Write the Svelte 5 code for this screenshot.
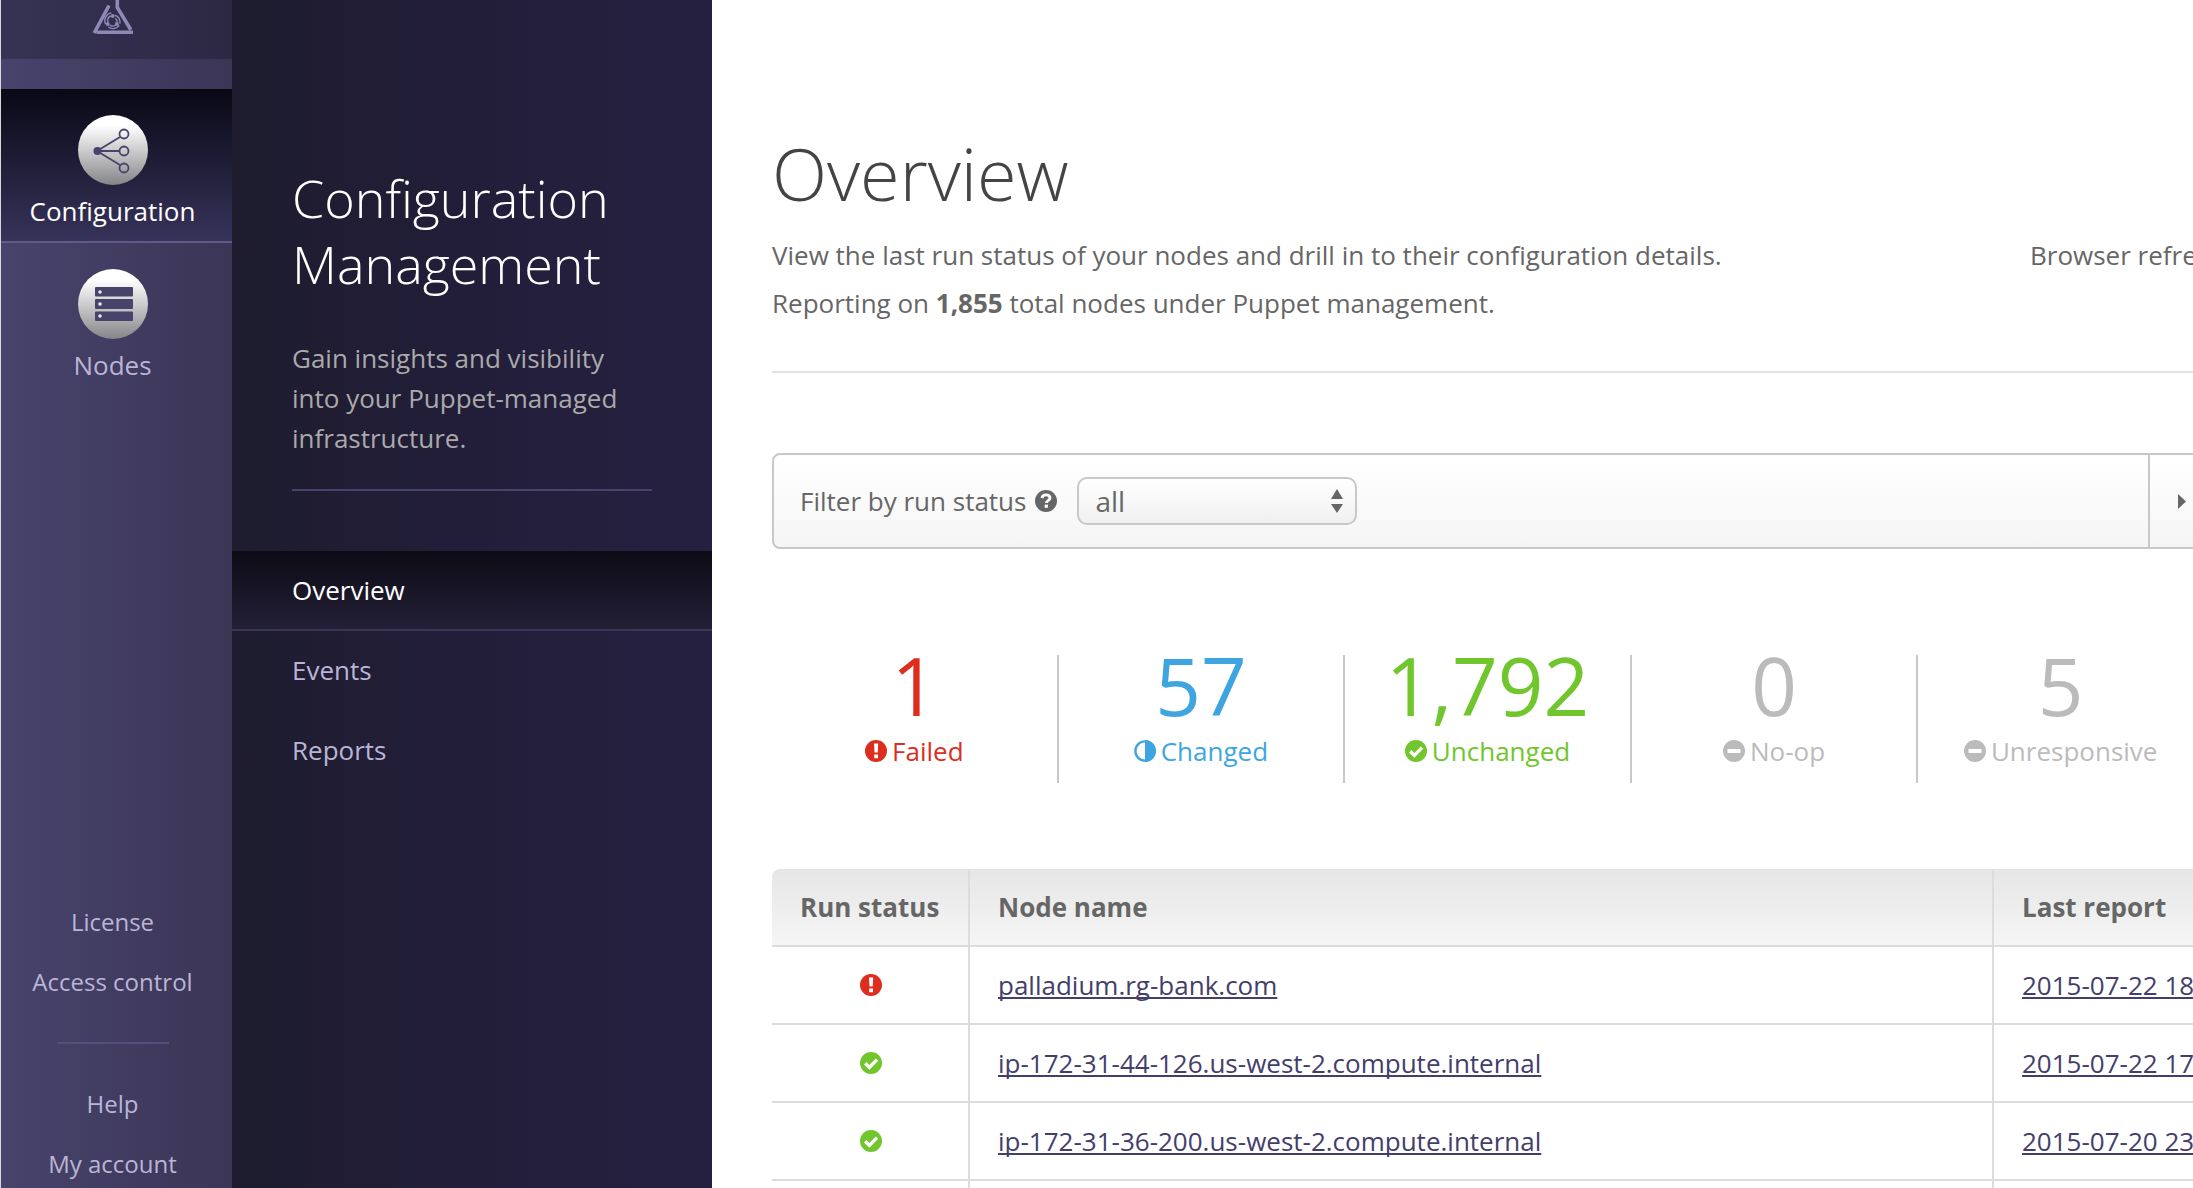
<script>
  const statuses = {
    failed: 'Failed',
    changed: 'Changed',
    unchanged: 'Unchanged',
    noop: 'No-op',
    unresponsive: 'Unresponsive',
  };
  const stats = [
    { kind: 'failed', count: '1' },
    { kind: 'changed', count: '57' },
    { kind: 'unchanged', count: '1,792' },
    { kind: 'noop', count: '0' },
    { kind: 'unresponsive', count: '5' },
  ];
  const rows = [
    { kind: 'failed', node: 'palladium.rg-bank.com', report: '2015-07-22 18' },
    { kind: 'unchanged', node: 'ip-172-31-44-126.us-west-2.compute.internal', report: '2015-07-22 17' },
    { kind: 'unchanged', node: 'ip-172-31-36-200.us-west-2.compute.internal', report: '2015-07-20 23' },
  ];
</script>

{#snippet statusIcon(kind)}
  <svg class="status {kind}" viewBox="0 0 22 22" aria-hidden="true">
    {#if kind === 'changed'}
      <circle cx="11" cy="11" r="9.6" fill="none" stroke="currentColor" stroke-width="2.4" />
      <path d="M11 0a11 11 0 0 1 0 22z" fill="currentColor" />
    {:else}
      <circle cx="11" cy="11" r="11" fill="currentColor" />
      {#if kind === 'failed'}
        <path d="M9 3.5h4.2l-.5 9H9.5zM9.2 14.5h3.8v3.7H9.2z" fill="#fff" />
      {:else if kind === 'unchanged'}
        <path d="M5.2 11.2l4.2 4.2 7.6-7.8" fill="none" stroke="#fff" stroke-width="3.4" />
      {:else}
        <rect x="4.5" y="9" width="13" height="4" rx="0.6" fill="#fff" />
      {/if}
    {/if}
  </svg>
{/snippet}

<div class="app">
  <nav class="rail" aria-label="Main">
    <a class="brand" href="#home" aria-label="Home">
      <svg viewBox="0 0 42 34" aria-hidden="true">
        <g fill="none" stroke="#8f89b8" stroke-width="3.6">
          <path d="M17 5.500L2.200 33" />
          <path d="M25.300 0v7.500L38.800 29.800" />
          <path d="M4.500 32.300h36.500" />
        </g>
        <g fill="none" stroke="#8f89b8" stroke-width="1.4">
          <path d="M13.600 24.200a8 8 0 0 1 5.700-11.300" />
          <path d="M22.800 15.300c3 .8 5.400 3.500 5.200 8.200" />
          <path d="M27.300 25.400c-2.600 3.600-7.600 4.200-11 1.600" />
          <path d="M15.900 22c-.6-2.800.5-5 2.900-6" />
          <path d="M23.300 18.300c1.500 1 2 2.300 1.900 3.900" />
          <path d="M23.600 25c-1.700 1.300-4 1.300-5.800.2" />
        </g>
        <g fill="#8f89b8">
          <circle cx="20.700" cy="16" r="2" />
          <circle cx="24.900" cy="24" r="2" />
          <circle cx="15.700" cy="24" r="2" />
        </g>
      </svg>
    </a>
    <ul class="sections">
      <li>
        <a class="section active" href="#configuration" aria-current="page">
          <svg viewBox="0 0 70 70" aria-hidden="true">
            <defs>
              <linearGradient id="disc" x1="0" y1="0" x2="0" y2="1">
                <stop offset="0.15" stop-color="#ffffff" />
                <stop offset="1" stop-color="#858589" />
              </linearGradient>
            </defs>
            <circle cx="35" cy="35" r="35" fill="url(#disc)" />
            <g fill="none" stroke="#48436a" stroke-width="1.800">
              <path d="M19 36l23-14M19 36h22M19 36l23 14" />
              <circle cx="46" cy="19" r="4.500" />
              <circle cx="46" cy="36" r="4.500" />
              <circle cx="46" cy="53" r="4.500" />
            </g>
            <circle cx="19.500" cy="36" r="4" fill="#48436a" />
          </svg>
          Configuration
        </a>
      </li>
      <li>
        <a class="section" href="#nodes">
          <svg viewBox="0 0 70 70" aria-hidden="true">
            <circle cx="35" cy="35" r="35" fill="url(#disc)" />
            <g fill="#48436a">
              <rect x="17" y="18" width="38" height="9.500" rx="1" />
              <rect x="17" y="30" width="38" height="10" rx="1" />
              <rect x="17" y="42.500" width="38" height="9.500" rx="1" />
            </g>
            <g fill="#e8e8ea">
              <circle cx="22" cy="23" r="1.800" />
              <circle cx="22" cy="35" r="1.800" />
              <circle cx="22" cy="47" r="1.800" />
            </g>
          </svg>
          Nodes
        </a>
      </li>
    </ul>
    <div class="account">
      <a href="#license">License</a>
      <a href="#access">Access control</a>
      <hr />
      <a href="#help">Help</a>
      <a href="#account">My account</a>
    </div>
  </nav>

  <aside class="panel">
    <h2>Configuration Management</h2>
    <p>Gain insights and visibility into your Puppet-managed infrastructure.</p>
    <hr />
    <nav aria-label="Configuration management">
      <a class="active" href="#overview" aria-current="page">Overview</a>
      <a href="#events">Events</a>
      <a href="#reports">Reports</a>
    </nav>
  </aside>

  <main>
    <div class="content">
      <h1>Overview</h1>
      <div class="intro">
        <p>
          View the last run status of your nodes and drill in to their configuration details.<br />
          Reporting on <strong>1,855</strong> total nodes under Puppet management.
        </p>
        <p class="refresh">Browser refre</p>
      </div>
      <hr />

      <form class="filter">
        <div class="field">
          <label for="run-status">Filter by run status</label>
          <svg class="help" viewBox="0 0 22 22" aria-hidden="true">
            <circle cx="11" cy="11" r="11" fill="currentColor" />
            <path d="M7 8.200C7.200 5.800 9 4.900 11 4.900c2.300 0 4 1.200 4 3.100 0 2.600-3.700 2.600-3.700 5" fill="none" stroke="#fff" stroke-width="2.800" />
            <rect x="9.700" y="14.600" width="3.200" height="3.200" fill="#fff" />
          </svg>
          <div class="picker">
            <select id="run-status">
              <option>all</option>
              {#each Object.values(statuses) as name}
                <option>{name}</option>
              {/each}
            </select>
            <svg viewBox="0 0 12 24" aria-hidden="true">
              <path d="M6 0l6 10H0zM0 15h12L6 24z" fill="#666" />
            </svg>
          </div>
        </div>
        <button type="button" aria-label="More filters">
          <svg viewBox="0 0 8 15" aria-hidden="true"><path d="M0 0l8 7.500L0 15z" fill="#666" /></svg>
        </button>
      </form>

      <div class="stats">
        {#each stats as stat}
          <div class="stat {stat.kind}">
            <div class="count">{stat.count}</div>
            <div class="name">{@render statusIcon(stat.kind)}{statuses[stat.kind]}</div>
          </div>
        {/each}
      </div>

      <table>
        <thead>
          <tr>
            <th class="run">Run status</th>
            <th>Node name</th>
            <th class="report">Last report</th>
          </tr>
        </thead>
        <tbody>
          {#each rows as row}
            <tr>
              <td>{@render statusIcon(row.kind)}</td>
              <td><a href="#node">{row.node}</a></td>
              <td><a href="#report">{row.report}</a></td>
            </tr>
          {/each}
          <tr><td></td><td></td><td></td></tr>
        </tbody>
      </table>
    </div>
  </main>
</div>

<style>
  :global(body) {
    margin: 0;
    background: #fff;
  }
  .app {
    display: flex;
    height: 100vh;
    overflow: hidden;
    font: 26px/36px 'Open Sans', sans-serif;
    color: #666;
  }
  h1, h2, p, ul, hr {
    margin: 0;
    padding: 0;
  }
  h1, h2 {
    font-weight: 300;
  }
  hr {
    border: 0;
    height: 2px;
  }
  svg {
    display: block;
    flex: none;
  }
  a {
    color: inherit;
    text-decoration: none;
  }

  .rail {
    flex: none;
    box-sizing: border-box;
    width: 232px;
    display: flex;
    flex-direction: column;
    border-left: 1px solid #d5d7dc;
    background: linear-gradient(90deg, #48436c, #3b3556);
    color: #bab5d6;
  }
  .brand {
    display: block;
    padding: 0 8px 25px 0;
    background: rgba(0, 0, 10, 0.24);
  }
  .brand svg {
    width: 42px;
    height: 34px;
    margin: 0 auto;
  }
  .sections {
    list-style: none;
    margin-top: 30px;
  }
  .section {
    display: flex;
    flex-direction: column;
    align-items: center;
    gap: 8px;
    padding: 26px 8px 12px 0;
    border-bottom: 2px solid transparent;
  }
  .section svg {
    width: 70px;
    height: 70px;
  }
  .section.active {
    color: #fff;
    background: linear-gradient(#090815, #37335a);
    border-color: #5f5a86;
  }
  .account {
    display: flex;
    flex-direction: column;
    align-items: center;
    gap: 28px;
    margin-top: auto;
    padding: 0 8px 8px 0;
    font-size: 24px;
    line-height: 32px;
  }
  .account hr {
    width: 112px;
    margin: 16px 0;
    background: #55507b;
  }

  .panel {
    flex: none;
    width: 480px;
    background: linear-gradient(90deg, #1e1c2e, #221e3a 50%, #252040);
    color: #aaa;
  }
  .panel h2 {
    padding: 165px 60px 0;
    font-size: 52px;
    line-height: 66px;
    color: #fff;
  }
  .panel p {
    padding: 41px 60px 31px;
    line-height: 40px;
  }
  .panel hr {
    margin: 0 60px 60px;
    background: #48436a;
  }
  .panel nav a {
    display: block;
    padding: 21px 60px;
    border-bottom: 2px solid transparent;
    color: #bab5d6;
  }
  .panel nav a.active {
    color: #fff;
    background: linear-gradient(#0d0c16, #231f36);
    border-color: #3b3556;
  }

  main {
    flex: 1;
    min-width: 0;
    padding-left: 60px;
    background: #fff;
  }
  .content {
    margin-right: -12px;
    padding-top: 133px;
  }
  h1 {
    font-size: 72px;
    line-height: 80px;
    color: #444;
  }
  .intro {
    display: flex;
    justify-content: space-between;
    margin: 18px 0 44px;
    line-height: 48px;
  }
  .refresh {
    flex: none;
    width: 175px;
    white-space: nowrap;
  }
  .content hr {
    background: #e3e3e3;
  }

  .filter {
    display: flex;
    margin-top: 80px;
    border: 2px solid #c8c8c8;
    border-radius: 8px;
    background: linear-gradient(#fff, #f5f5f5);
  }
  .field {
    flex: 1;
    display: flex;
    align-items: center;
    padding: 22px 26px;
  }
  .help {
    width: 22px;
    height: 22px;
    margin: 0 20px 0 9px;
  }
  .picker {
    position: relative;
  }
  .picker svg {
    position: absolute;
    right: 14px;
    top: 12px;
    width: 12px;
    height: 24px;
    pointer-events: none;
  }
  select {
    appearance: none;
    display: block;
    box-sizing: border-box;
    width: 280px;
    height: 48px;
    padding: 0 16px;
    border: 2px solid #c8c8c8;
    border-radius: 10px;
    background: linear-gradient(#fff, #f0f0f0);
    font: inherit;
    font-size: 28px;
    color: inherit;
  }
  .filter button {
    width: 55px;
    padding: 0 0 0 28px;
    border: 0;
    border-left: 2px solid #c8c8c8;
    background: none;
  }
  .filter button svg {
    width: 8px;
    height: 15px;
  }

  .stats {
    display: grid;
    grid-template-columns: repeat(5, 1fr);
    margin: 106px 0 86px;
  }
  .stat {
    padding-bottom: 14px;
    border-right: 2px solid #c8c8c8;
    text-align: center;
  }
  .count {
    font-size: 80px;
    line-height: 60px;
    margin-bottom: 18px;
  }
  .name {
    display: flex;
    align-items: center;
    justify-content: center;
    gap: 5px;
  }
  .status {
    width: 22px;
    height: 22px;
  }
  .failed {
    color: #dc2d1e;
  }
  .changed {
    color: #3ea5e0;
  }
  .unchanged {
    color: #70c62c;
  }
  .noop,
  .unresponsive {
    color: #bbb;
  }

  table {
    width: 100%;
    table-layout: fixed;
    border-collapse: separate;
    border-spacing: 0;
  }
  thead th {
    background: linear-gradient(#e6e6e6, #f5f5f5);
    text-align: left;
    font-weight: 700;
  }
  th, td {
    height: 36px;
    padding: 20px 26px 20px 28px;
    border-right: 2px solid #dcdcdc;
    border-bottom: 2px solid #dcdcdc;
    white-space: nowrap;
  }
  th:first-child {
    border-top-left-radius: 8px;
  }
  th.run {
    width: 142px;
  }
  th.report {
    width: 155px;
  }
  td .status {
    margin: 0 auto;
  }
  td a {
    color: #433e6b;
    text-decoration: underline;
    text-decoration-thickness: 2px;
    text-underline-offset: 2px;
    text-decoration-skip-ink: none;
  }
</style>
